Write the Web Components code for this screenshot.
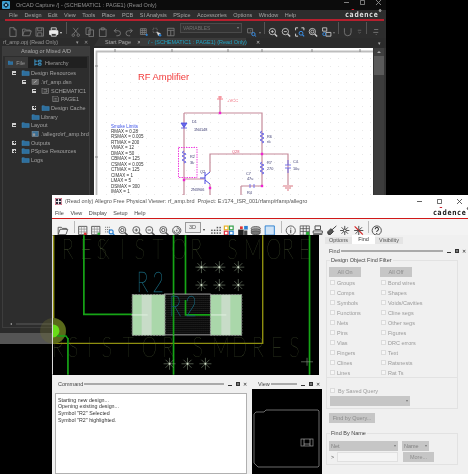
<!DOCTYPE html>
<html><head><meta charset="utf-8"><title>OrCAD and Allegro</title>
<style>html,body{margin:0;padding:0;background:#000;width:468px;height:474px;overflow:hidden}</style>
</head><body>
<x-desktop>
  <x-capture></x-capture>
  <x-allegro></x-allegro>
</x-desktop>
<script>
const BASE=':host{display:block;box-sizing:border-box;font-family:"Liberation Sans",Arial,sans-serif}*{box-sizing:border-box}';
function el(name,css,html){customElements.define(name,class extends HTMLElement{
  connectedCallback(){ if(this.shadowRoot)return; const r=this.attachShadow({mode:'open'});
    r.innerHTML='<style>'+BASE+css+'</style>'+(typeof html==='function'?html(this):html);}
});}
const S=(b)=>`<svg viewBox="0 0 12 12" width="100%" height="100%" fill="none" stroke="var(--ic,#8a8a8a)" stroke-width="1">${b}</svg>`;
const mag=(inner='')=>`<circle cx="5.500" cy="5.500" r="3.800"/><path d="M8.300 8.300l3 3" stroke-width="1.600"/>${inner}`;
const ICONS={
 new:'<path d="M2.500 .8h5l2.500 2.500v8h-7.500zM7.500 .8v2.500h2.500"/>',
 open:'<path d="M1 10.500v-8h3.500l1 1.200h4.500v1.500M1 10.500h8.500l2-5.800h-8.500z"/>',
 save:'<path d="M1.500 1h9v10h-9zM3.500 1v3.500h5v-3.500M3.500 11v-4h5v4"/>',
 print:'<path d="M3 1h6v3h-6z" stroke="#ddd"/><path d="M1 4.500h10v4.500h-10z" fill="#eee" stroke="#eee"/><path d="M3 8h6v3h-6z" fill="#222" stroke="#eee"/>',
 cut:'<path d="M3 1l5.500 7M9 1l-5.500 7"/><circle cx="3" cy="9.800" r="1.500"/><circle cx="9" cy="9.800" r="1.500"/>',
 copy:'<path d="M1.500 1h5v8h-5zM5 3.500h5.500v8h-5.500z"/>',
 paste:'<path d="M2 2.500h8v9h-8zM4.200 1h3.600v2.500h-3.600z"/>',
 undo:'<path d="M3 4.500h4.500a3 3 0 0 1 0 6h-2M3 4.500l2.500-2.500M3 4.500l2.500 2.500"/>',
 redo:'<path d="M9 4.500h-4.500a3 3 0 0 0 0 6h2M9 4.500l-2.500-2.500M9 4.500l-2.500 2.500"/>',
 gridsel:'<path d="M2 2h7v7h-7zM4.300 2v7M6.600 2v7M2 4.300h7M2 6.600h7"/><circle cx="9.500" cy="9.500" r="1.300" fill="#2a7fd0" stroke="none"/>',
 select:'<path d="M1.500 1.500h5v5h-5z" stroke-dasharray="1 1"/><path d="M6 6l4.500 1.800-1.800.7-.7 2z" fill="#ddd" stroke="#ddd" stroke-width=".5"/><circle cx="10" cy="10" r="1.500" fill="#2a7fd0" stroke="none"/>',
 frame:'<path d="M2 1.500h8v9h-8zM2 4h8M6 4v6.500"/>',
 place:'<path d="M1 2h6v5h-6z"/><path d="M4 5l1.500-1"/><circle cx="8" cy="8.500" r="2" stroke="#3a8ce0" stroke-width="1.200"/><path d="M9.500 10l1.800 1.500" stroke="#3a8ce0" stroke-width="1.200"/>',
 zin:mag('<path d="M3.700 5.500h3.600M5.500 3.700v3.600"/>'),
 zout:mag('<path d="M3.700 5.500h3.600"/>'),
 zfit:'<path d="M1 4v-3h3M8 1h3v3M1 8v3h3" stroke-width="1.200"/><circle cx="7.500" cy="7.500" r="2.300" stroke="#3a8ce0" stroke-width="1.200"/><path d="M9.300 9.300l2 2" stroke="#3a8ce0" stroke-width="1.400"/>',
 zall:mag('<circle cx="5.500" cy="5.500" r="1.800"/>'),
 zmulti:'<path d="M1 1h5v4h-5z"/><path d="M5 6.500h6v4.500h-6z"/><circle cx="3" cy="8.500" r="1.800" stroke="#3a8ce0" stroke-width="1.100"/>',
 magnet:'<path d="M2 1.500v5a4 4 0 0 0 8 0v-5"/>',
 sm:'<path d="M3 3h6M4 6l2 2 2-2"/>',
 gdrop:'<path d="M4 3h5M3 6.500h6M6 9h1"/>',
 board:'<path d="M1.500 1.500h9v9h-9z" stroke="#555"/><path d="M1.500 4.500h9M1.500 7.500h9M4.500 1.500v9M7.500 1.500v9" stroke="#888" stroke-width=".7"/><circle cx="8.700" cy="9.800" r="1.500" fill="#e03030" stroke="none"/>',
 boardg:'<path d="M1.500 1.500h9v9h-9z" stroke="#555"/><path d="M1.500 4.500h9M1.500 7.500h9M4.500 1.500v9M7.500 1.500v9" stroke="#888" stroke-width=".7"/><circle cx="9.300" cy="9.800" r="1.500" fill="#2cae3a" stroke="none"/>',
 dotsz:'<g stroke="#555" stroke-dasharray="1 1"><path d="M1 2.500h5M1 5h5M1 7.500h4"/></g><circle cx="7.500" cy="7.500" r="2.200" stroke="#2a7fd0" stroke-width="1.200"/><path d="M9 9l2 2" stroke="#2a7fd0" stroke-width="1.400"/>',
 rot:'<circle cx="6" cy="6" r="4.500" stroke="#555"/><path d="M6 3a3 3 0 1 1-3 3" stroke="#555"/><circle cx="6" cy="6" r="1" fill="#777" stroke="none"/>',
 dots:'<g fill="#555" stroke="none"><rect x="1" y="5" width="1.600" height="1.600"/><rect x="4" y="5" width="1.600" height="1.600"/><rect x="7" y="5" width="1.600" height="1.600"/><rect x="10" y="5" width="1.600" height="1.600"/><rect x="1" y="8" width="1.600" height="1.600"/><rect x="4" y="8" width="1.600" height="1.600"/><rect x="7" y="8" width="1.600" height="1.600"/><rect x="10" y="8" width="1.600" height="1.600"/><rect x="7" y="2" width="1.600" height="1.600"/><rect x="10" y="2" width="1.600" height="1.600"/></g>',
 color:'<g stroke-width="1.300"><rect x="1.200" y="1.200" width="4" height="4" stroke="#e8b020" fill="#fff"/><rect x="6.800" y="1.200" width="4" height="4" stroke="#35a04a" fill="#fff"/><rect x="1.200" y="6.800" width="4" height="4" stroke="#e03040" fill="#fff"/><rect x="6.800" y="6.800" width="4" height="4" stroke="#2a7fd0" fill="#fff"/></g>',
 mats:'<g stroke="none"><rect x="1" y="5" width="6" height="6" fill="#222"/><rect x="7.500" y="1" width="4" height="4" fill="#2a7fd0"/><rect x="3" y="1.500" width="3" height="3" fill="#e03030"/><rect x="7.500" y="6" width="3.500" height="5" fill="#444"/></g>',
 stack:'<ellipse cx="6" cy="4" rx="5" ry="2.200" fill="#bbb" stroke="#555"/><ellipse cx="6" cy="6.500" rx="5" ry="2.200" fill="#999" stroke="#555"/><ellipse cx="6" cy="8.500" rx="5" ry="2" fill="#777" stroke="#555"/>',
 info:'<circle cx="6" cy="6" r="5" stroke="#555"/><path d="M6 5v4M6 3v1" stroke="#333"/>',
 gridg:'<path d="M1 1h10v10h-10zM1 4h10M1 7h10M4.300 1v10M7.700 1v10" stroke="#444" stroke-width=".8"/><rect x="7.500" y="7.500" width="3.500" height="3.500" fill="#2cae3a" stroke="none"/>',
 stamp:'<path d="M3 1h6v4h-6zM1 6.500h10v2.500h-10zM1 10.500h10" stroke="#444"/>',
 flash:'<path d="M11 1l-5 4.500M5 4l3 3-3.500 3.500-2.500-.5-.5-2.500z" stroke="#333" fill="#555"/>',
 spark:'<path d="M6 1v10M1 6h10M2.500 2.500l7 7M9.500 2.500l-7 7" stroke="#444"/><circle cx="6" cy="6" r="1.500" fill="#fff" stroke="#444"/>',
 sparkx:'<path d="M6 1v10M1 6h10M2.500 2.500l7 7" stroke="#444"/><path d="M1.500 1.500l9 9" stroke="#e03030" stroke-width="1.300"/><path d="M9.500 2.500l-7 7" stroke="#444"/>',
 help:'<circle cx="6" cy="6" r="5" stroke="#444"/><path d="M4.300 4.600a1.800 1.800 0 1 1 2.600 1.500c-.6.3-.9.7-.9 1.400M6 8.700v1" stroke="#333" stroke-width="1.100"/>',
 blue:'<path d="M1 1h10v10h-10z" stroke="#2a7fd0" fill="#cfe3f6"/>'
};
el('x-tool',':host{display:block;width:var(--w,13.5px);height:var(--h,10px);flex:none;padding:0 1px}',
  h=>S(ICONS[h.getAttribute('i')]||''));
el('x-sep',':host{display:block;width:1px;height:var(--sh,12px);background:var(--sc,#555);flex:none;margin:0 var(--sm,2px)}','');
el('x-caret',':host{display:block;width:0;height:0;border:1.5px solid transparent;border-top:2px solid var(--ic,#8a8a8a);border-bottom:0;flex:none;align-self:flex-end;margin:0 1px 1px 0}','');
el('x-wincontrols',':host{display:flex;align-items:center;margin-left:auto;gap:var(--cg,12px);color:var(--wc,#999);padding-right:var(--cr,3px)}svg{display:block;width:5px;height:5px;stroke:currentColor;stroke-width:1;fill:none}',
  `<svg viewBox="0 0 6 6"><path d="M0 3h6"/></svg><svg viewBox="0 0 6 6"><path d="M.5 .5h5v5h-5z"/></svg><svg viewBox="0 0 6 6"><path d="M0 0l6 6M6 0l-6 6"/></svg>`);
el('x-logo',`:host{display:inline-block;position:relative;font-family:"DejaVu Sans",sans-serif;font-weight:700;font-size:7.5px;letter-spacing:.95px;color:var(--lc,#ddd);line-height:9px;transform:scaleX(.8);transform-origin:right center}
  i{position:absolute;left:7.5px;top:-1px;width:3px;height:1.2px;background:#d02030}b{position:absolute;right:-3.5px;top:-1px;width:3px;height:3px;border-radius:50%;border:.5px solid currentColor}`,
  `cadence<i></i><b></b>`);
el('x-tree-row',`:host{display:flex;align-items:center;height:8.67px;color:#a2a2a2;font-size:5.5px;white-space:nowrap;padding-left:calc(9px + 10px * var(--l,0))}
  .t{width:9px;flex:none;display:flex;align-items:center}.t span{width:4px;height:4px;background:#cfcfcf;display:block;position:relative}
  .t span::after{content:"";position:absolute;left:.5px;right:.5px;top:1.5px;height:1px;background:#333}.p span::before{content:"";position:absolute;top:.5px;bottom:.5px;left:1.5px;width:1px;background:#333}
  .i{width:10px;flex:none;height:6px;display:block}`,
  h=>{const k=h.getAttribute('k'),ic=h.getAttribute('i')||'f';
   const g={f:'<path d="M0 1h3l1 1h5v5H0z" fill="#2e6f9e" stroke="#3f8fc5" stroke-width=".6"/>',
    d:'<rect x="0" y="0" width="8" height="7" fill="#666" stroke="#888" stroke-width=".6"/><path d="M2 5l4-3" stroke="#ccc" stroke-width=".8"/>',
    s:'<rect x="0" y="0" width="8" height="7" fill="#333" stroke="#999" stroke-width=".7"/><path d="M2 2h4v3H2" stroke="#bbb" stroke-width=".6" fill="none"/>',
    p:'<path d="M1 0h5l2 2v5H1z" fill="#333" stroke="#aaa" stroke-width=".7"/><path d="M3 3h3M3 5h3" stroke="#ccc" stroke-width=".5"/>',
    b:'<rect x="0" y="0" width="8" height="7" fill="#3a6f95" stroke="#999" stroke-width=".6"/><rect x="1" y="3" width="3" height="3" fill="#999"/>'}[ic];
   return `<div class="t ${k==='p'?'p':''}">${k?'<span></span>':''}</div><svg class="i" viewBox="0 0 10 7.5">${g}</svg><span><slot></slot></span>`});
el('x-tree',':host{padding-top:1px;background:#2d2d2d;flex:1}','<slot></slot>');
el('x-left-panel',`:host{width:92px;flex:none;display:flex;flex-direction:column;background:#2b2b2b;color:#a0a0a0}
  .h{height:8px;flex:none;display:flex;align-items:center;font-size:5.3px;padding:0 3px;white-space:nowrap;color:#9a9a9a}
  .h i{margin-left:auto;font-style:normal;font-size:5px;display:flex;gap:5px;padding-right:1px}
  .box{flex:1;margin:0 2px 5px;border:1px solid #3d3d3d;display:flex;flex-direction:column;background:#2d2d2d}
  .t{height:9px;flex:none;background:#3c3c3c;font-size:5.5px;text-align:center;line-height:9px;color:#aaa}
  .tabs{height:11px;flex:none;margin:1px 2px 0;background:#202020;display:flex;font-size:5.5px;color:#9a9a9a;align-items:center}
  .tab{display:flex;align-items:center;height:100%;gap:3px;padding:0 3px}.tab.on{background:#3a3a3a;width:23px}
  .tab svg{width:8px;height:7px}
  .sb{height:7px;flex:none;display:flex;align-items:center;padding-left:7px}.sb::before{content:"";border:1.5px solid transparent;border-right:2px solid #aaa;border-left:0}
  .sb::after{content:"";height:2px;background:#444;flex:1;margin:0 4px}`,
  `<div class="h">rf_amp.opj (Read Only)<i><span>&#9662;</span><span>&#10005;</span></i></div>
   <div class="box"><div class="t">Analog or Mixed A/D</div>
   <div class="tabs"><div class="tab on"><svg viewBox="0 0 9 7"><path d="M0 1h3l1 1h5v5H0z" fill="#2e6f9e" stroke="#3f8fc5" stroke-width=".6"/></svg>File</div>
   <div class="tab" style="padding-left:6px"><svg viewBox="0 0 9 7"><path d="M1 0v7M1 2h3M1 5.5h3M5 1h3v2H5zM5 4.500h3v2H5z" stroke="#3f9fd5" fill="none"/></svg>Hierarchy</div></div>
   <slot></slot><div class="sb"></div></div>`);
el('x-doc-tabs',`:host{display:flex;height:8px;flex:none;font-size:5.5px;align-items:flex-end;white-space:nowrap;color:#aaa;padding-right:5px;background:#2b2b2b}
  .a{width:46px;height:8px;display:flex;align-items:center;padding-left:11px;background:#333;clip-path:polygon(5px 0,100% 0,100% 100%,0 100%);gap:6px}
  .b{width:106px;height:8px;display:flex;align-items:center;padding-left:8px;background:#3b3b3b;color:#1fa4c4;gap:9px}
  u{color:#bbb;text-decoration:none;font-size:5px}i{margin-left:auto;font-style:normal;font-size:5px}`,
  `<div class="a">Start Page <u>&#10005;</u></div><div class="b">/ - (SCHEMATIC1 : PAGE1) (Read Only) <u>&#10005;</u></div><i>&#9662;</i>`);
el('x-scroll-v',`:host{width:13px;flex:none;background:#333;padding:0 2px 0 1px;display:flex;flex-direction:column}
  .u{height:8px;display:flex;justify-content:center;align-items:center;background:#3f3f3f}.u::before{content:"";border:2px solid transparent;border-bottom:2px solid #aaa;border-top:0}
  .th{height:19px;background:#5a5a5a}.tr{flex:1;background:#3c3c3c}`,`<div class="u"></div><div class="th"></div><div class="tr"></div>`);
el('x-schematic',`:host{flex:1;background:#fff;min-width:0}svg{display:block;width:100%;height:100%}
 text{font-family:"Liberation Sans",Arial,sans-serif}`,
 ()=>{
  const res=(x,y)=>`<polyline points="${x},${y} ${x-2},${y+1.5} ${x+2},${y+3} ${x-2},${y+5} ${x+2},${y+7} ${x-2},${y+9} ${x+2},${y+11} ${x},${y+12}" stroke="#6a6ae8" fill="none" stroke-width="1"/>`;
  const lim=["RMAX = 0.28","RSMAX = 0.005","RTMAX = 200","VMAX = 12","DMAX = 50","CBMAX = 125","CSMAX = 0.005","CTMAX = 125","CIMAX = 1","LMAX = 5","DSMAX = 300","IMAX = 1"];
  return `<svg viewBox="94 48 279 285" preserveAspectRatio="xMinYMin slice">
  <defs><pattern id="g" width="8" height="8" patternUnits="userSpaceOnUse"><rect x="2" y="2" width=".7" height=".7" fill="#cfcfcf"/></pattern></defs>
  <rect x="99" y="53" width="274" height="280" fill="url(#g)"/>
  <path d="M373 51.500H96.500V333" fill="none" stroke="#bdbdbd" stroke-width="1.800"/>
  <g stroke="#888" stroke-width="1"><path d="M115 49v3M172 49v3M228 49v3M262 49v3M312 49v3M360 49v3M95 66h3M95 157h3"/></g>
  <text x="138" y="80" font-size="9.4" fill="#f23a3a">RF Amplifier</text>
  <g fill="none" stroke="#c58a9a" stroke-width="1.2">
   <path d="M184 113h78v72M184 113v66M220 100v13M210 172v-18h78v31M262 186h-21M241 186v10M184 179v16h-2M184 179h20M210 184v11"/>
  </g>
  <g fill="#f020d0"><rect x="218.8" y="111.8" width="2.4" height="2.4"/><rect x="260.8" y="152.8" width="2.4" height="2.4"/><rect x="260.8" y="184.8" width="2.4" height="2.4"/><rect x="182.8" y="178.8" width="2.4" height="2.4"/><rect x="208.8" y="186.8" width="2.4" height="2.4"/></g>
  <path d="M220 96v4M217 99h6M218 97l4 0" stroke="#f06070" stroke-width=".8" fill="none"/>
  <text x="227" y="101.5" font-size="4.2" fill="#f06878">+VCC</text>
  <rect x="178.5" y="147.5" width="18.5" height="30" fill="none" stroke="#f040e0" stroke-dasharray="1.500 1" stroke-width="1"/>
  <path d="M181 123h6l-3 4.500zM181 128h6" fill="#6a6ae8" stroke="#4a4ae0" stroke-width=".8"/>
  ${res(184,151)}${res(262,131)}${res(262,162)}
  <path d="M285 165h6M285 168h6M288 160v5M288 168v5" stroke="#6a6ae8" fill="none" stroke-width=".9"/>
  <path d="M283 186h10M285 188h6M287 190h2" stroke="#d05060" stroke-width=".8"/>
  <path d="M250 184v4M254 184v4" stroke="#6a6ae8" stroke-width=".9"/>
  <path d="M205 172v12M205 176l5-4M205 180l5 4M200 178h5" stroke="#4a4ae0" fill="none" stroke-width="1"/>
  <g font-size="3.8" fill="#3a3a70">
   <text x="192" y="122.5">D1</text><text x="194" y="130.5">1N4148</text>
   <text x="190" y="158">R2</text><text x="190" y="164">3k</text>
   <text x="200" y="172.5">Q2</text><text x="191" y="190.5">2N3906</text>
   <text x="267" y="137.5">R6</text><text x="267" y="142.5">r/c</text>
   <text x="267" y="163.5">R7</text><text x="267" y="169.5">270</text>
   <text x="293" y="163">C4</text><text x="293" y="169.5">10u</text>
   <text x="246" y="174.5">C7</text><text x="247" y="180">47u</text>
   <text x="247" y="194">R4</text>
  </g>
  <text x="232" y="153" font-size="4" fill="#e05070">Q28</text>
  <text x="111" y="127.5" font-size="4.5" fill="#3a50e8">Smoke Limits</text>
  <g font-size="4.5" fill="#333">${lim.map((t,i)=>`<text x="111" y="${133+i*5.45}">${t}</text>`).join('')}</g>
  </svg>`});
el('x-capture',`:host{position:absolute;left:0;top:0;width:386px;height:344px;background:#2b2b2b;display:flex;flex-direction:column;--ic:#7c7c7c}
  .title{height:10px;background:#0c0c0c;display:flex;align-items:center;padding-left:2px;color:#8f8f8f;font-size:5.5px;gap:3px;flex:none;white-space:nowrap}
  .title svg{width:8px;height:8px;flex:none}
  .menu{height:9px;flex:none;display:flex;align-items:center;padding-left:9px;gap:6.5px;font-size:5.5px;color:#a5a5a5;padding-right:8px;background:#2d2d2d}
  x-logo{margin-left:auto}
  .red{height:1.5px;flex:none;background:#b5202e;margin-left:5px;margin-right:2px}
  .tb{height:17.5px;flex:none;display:flex;align-items:center;padding:0 0 3px 6px;background:#2d2d2d}
  .combo{width:62px;height:10px;background:#333;border:1px solid #4a4a4a;color:#707070;font-size:5px;line-height:8px;padding-left:2px;margin:0 3px;flex:none;position:relative}
  .combo::after{content:"";position:absolute;right:2px;top:3px;border:1.5px solid transparent;border-top:2px solid #888;border-bottom:0}
  .main{flex:1;display:flex;min-height:0}.right{flex:1;min-width:0;display:flex;flex-direction:column;margin-left:2px}
  .doc{flex:1;min-height:0;display:flex;margin-top:2px}.status{height:11px;flex:none;background:#555}
  .zoom{--ic:#d0d0d0}`,
  `<div class="title"><svg viewBox="0 0 8 8"><rect width="8" height="8" rx="1" fill="#3d9fd0"/><path d="M4 1l3 3-3 3-3-3z" fill="#0c2c44"/><circle cx="4" cy="4" r="1" fill="#bfe6f5"/></svg><span style="margin-left:3px">OrCAD Capture /] - (SCHEMATIC1 : PAGE1) (Read Only)</span><x-wincontrols style="--cg:11px;--cr:5px;margin-top:-6px"></x-wincontrols></div>
  <div class="menu"><span>File</span><span>Design</span><span>Edit</span><span>View</span><span>Tools</span><span>Place</span><span>PCB</span><span>SI Analysis</span><span>PSpice</span><span>Accessories</span><span>Options</span><span>Window</span><span>Help</span><x-logo></x-logo></div>
  <div class="red"></div>
  <div class="tb"><x-tool i="new"></x-tool><x-tool i="open"></x-tool><x-tool i="save"></x-tool><x-tool i="print"></x-tool><x-caret style="--ic:#ddd"></x-caret><x-sep style="margin:0 2px 0 3px"></x-sep><x-tool i="cut"></x-tool><x-tool i="copy"></x-tool><x-tool i="paste"></x-tool><x-tool i="undo"></x-tool><x-tool i="redo"></x-tool><x-tool i="gridsel"></x-tool><x-tool i="select"></x-tool><x-tool i="frame"></x-tool><div class="combo">VARIABLES</div><x-tool i="place"></x-tool><x-caret></x-caret><x-sep style="margin:0 1px 0 2px"></x-sep><x-tool class="zoom" i="zin"></x-tool><x-tool class="zoom" i="zout"></x-tool><x-tool class="zoom" i="zfit"></x-tool><x-tool class="zoom" i="zall"></x-tool><x-tool class="zoom" i="zmulti"></x-tool><x-caret></x-caret><x-sep></x-sep><x-tool i="magnet"></x-tool><x-tool i="sm" style="--w:9px"></x-tool><x-sep></x-sep><x-tool i="gdrop"></x-tool></div>
  <div class="main"><x-left-panel>
    <x-tree>
      <x-tree-row k="m">Design Resources</x-tree-row>
      <x-tree-row style="--l:1" k="m" i="d">.\\rf_amp.dsn</x-tree-row>
      <x-tree-row style="--l:2" k="m" i="s">SCHEMATIC1</x-tree-row>
      <x-tree-row style="--l:3" i="p">PAGE1</x-tree-row>
      <x-tree-row style="--l:2" k="p">Design Cache</x-tree-row>
      <x-tree-row style="--l:1">Library</x-tree-row>
      <x-tree-row k="m">Layout</x-tree-row>
      <x-tree-row style="--l:1" i="b">.\\allegro\\rf_amp.brd</x-tree-row>
      <x-tree-row k="p">Outputs</x-tree-row>
      <x-tree-row k="p">PSpice Resources</x-tree-row>
      <x-tree-row>Logs</x-tree-row>
    </x-tree></x-left-panel>
    <div class="right"><x-doc-tabs></x-doc-tabs><div class="doc"><x-schematic></x-schematic><x-scroll-v></x-scroll-v></div></div>
  </div><div class="status"></div>`);
el('x-board',`:host{flex:1;background:#000;min-height:0}svg{display:block;width:100%;height:100%;overflow:visible}text{font-family:"Lato","DejaVu Sans",sans-serif}`,
 ()=>{
  const star=(x,y)=>`<use href="#st" x="${x}" y="${y}"/>`;
  const pts=[[202,267],[220,267],[239,267],[202,285],[220,285],[239,285],[170,364],[188,364],[206,364]];
  const SX=.72;
  const xs=a=>a.map(v=>(v/SX).toFixed(1)).join(' ');
  return `<svg viewBox="52 235 268 140">
   <defs><g id="st" stroke="#8c9c84" stroke-width=".55"><path d="M-6 0H6M0-6V6M-4-4L4 4M4-4L-4 4"/><circle r="1" fill="#d8e4d0" stroke="none"/></g>
   <pattern id="h" width="2" height="2" patternUnits="userSpaceOnUse"><rect width="2" height="2" fill="#0a0a0a"/><rect width="1" height="1" fill="#2a2a2a"/></pattern>
   <clipPath id="cl"><rect x="52" y="310" width="30" height="40"/></clipPath></defs>
   <g fill="#4c5b35" font-weight="100" font-size="27">
    <text transform="scale(${SX} 1)" y="258.5" x="${xs([62,80,81,97,98,120,135,153,172,191,210,228,245,267,283,300])}">REESKISTOR SMORE</text>
    <text transform="scale(${SX} 1)" y="357" x="${xs([52,68,87,102,123,142,163,178,193,213,233,253,272,290])}">RSISTOR SMDRES</text>
   </g>
   <path d="M53.700 235V343.500H263.500V235" fill="none" stroke="#8f8f10" stroke-width="1.400"/>
   <g fill="none" stroke="#16a416" stroke-width="1.700">
    <path d="M84 235V314.500H147M174 235V375M186 235V315H227M310.500 235V375M68 338V375"/>
   </g>
   <path d="M198 267h22" stroke="#8c9c84" stroke-width=".5"/>
   ${pts.map(p=>star(p[0],p[1])).join('')}
   <path d="M302 362h12M308 358v8" stroke="#8c9c84" stroke-width=".6"/>
   <rect x="165" y="294" width="46" height="41" fill="url(#h)" stroke="#c0c0c0" stroke-width=".8"/>
   <g><rect x="132.500" y="294.500" width="33" height="41" fill="#aad7aa" stroke="#888" stroke-width="1" stroke-dasharray="2 1"/><rect x="211" y="294.500" width="31.500" height="41" fill="#aad7aa" stroke="#888" stroke-width="1" stroke-dasharray="2 1"/>
   <rect x="142" y="295" width="10" height="40" fill="#c8dcc8"/><rect x="222" y="295" width="9" height="40" fill="#c8dcc8"/></g>
   <path d="M174 294V335M186 300V315H211" stroke="#16a416" stroke-width="1.700" fill="none"/>
   <path d="M132 315h16M211 315h16" stroke="#e0f0e0" stroke-width="1"/>
   <g fill="#175f72" font-weight="100" stroke="#175f72" stroke-width=".4" font-size="27">
    <text transform="scale(${SX} 1)" x="${xs([137,153])}" y="292">R2</text>
    <text transform="scale(${SX} 1)" x="${xs([170,186])}" y="316">R2</text>
   </g>
   <circle cx="53" cy="331" r="13" fill="#6a6a30" opacity=".35"/>
   <g clip-path="url(#cl)"><circle cx="53" cy="331" r="13" fill="#5a6a1a"/><circle cx="53" cy="331" r="6.500" fill="#68dc18"/></g>
   <path d="M57 336H66L68 339" stroke="#16a416" stroke-width="1.500" fill="none"/>
   <path d="M52.500 235V375" stroke="#dcdcdc" stroke-width="1"/>
  </svg>`});
el('x-panelhead',`:host{display:flex;align-items:center;font-size:5.5px;color:#444;white-space:nowrap}
  .l{flex:1;height:1.5px;background:#aaa;margin:0 4px 0 1px}
  .c{display:flex;gap:3.5px;align-items:center;color:#222;font-size:5px}.m{width:4px;height:1px;background:#333;margin-top:3px}.f{width:4px;height:4px;border:1px solid #333;background:#777}`,
  `<slot></slot><div class="l"></div><div class="c"><div class="m"></div><div class="f"></div><span>&#10005;</span></div>`);
el('x-command',`:host{flex:1;display:flex;flex-direction:column;min-width:0}
  x-panelhead{height:8px;flex:none;margin:5px 5px 5px 6px}
  .box{flex:1;margin-left:3px;margin-right:5px;background:#fff;border:1px solid #b0b0b0;padding:2.5px 2px;font-size:5.3px;line-height:6.8px;color:#333;white-space:nowrap}`,
  `<x-panelhead>Command</x-panelhead><div class="box">Starting new design...<br>Opening existing design...<br>Symbol "R2" Selected<br>Symbol "R2" highlighted.</div>`);
el('x-view',`:host{width:70px;flex:none;display:flex;flex-direction:column}
  x-panelhead{height:8px;flex:none;margin:5px 2px 1px 6px}
  .box{flex:1;background:#000;min-height:0}svg{display:block;width:100%;height:100%}`,
  `<x-panelhead>View</x-panelhead><div class="box"><svg viewBox="252 389 70 85"><path d="M254 414l2-2h8l2-2h52l1 1v55l-1 1h-60l-4-4z" fill="none" stroke="#999" stroke-width=".7"/><rect x="301" y="439" width="12" height="7" fill="none" stroke="#999" stroke-width=".7"/><path d="M304 439v7M310 439v7M304 444h6" stroke="#ccc" stroke-width=".6" fill="none"/></svg></div>`);
el('x-chk',`:host{display:flex;align-items:center;height:10px;font-size:5.5px;color:#9a9a9a;white-space:nowrap;gap:2px}
  i{display:block;width:5px;height:5px;border:1px solid #dcdcdc;background:#f6f6f6;flex:none}`,`<i></i><span><slot></slot></span>`);
el('x-btn',`:host{display:flex;align-items:center;justify-content:center;background:#c6c6c6;color:#8c8c8c;font-size:5.5px;height:10px;white-space:nowrap}`,`<slot></slot>`);
el('x-combo',`:host{display:flex;align-items:center;background:#c6c6c6;color:#808080;font-size:5.5px;height:10px;padding:0 2px;white-space:nowrap}
  i{margin-left:auto;border:1.5px solid transparent;border-top:2px solid #777;border-bottom:0}`,`<slot></slot><i></i>`);
el('x-find-panel',`:host{width:149px;flex:none;background:#f0f0f0;display:flex;flex-direction:column;font-size:5.5px}
  .tabs{display:flex;height:9px;margin-left:6px;color:#555;white-space:nowrap;flex:none;align-items:flex-end}
  .tabs span{height:7px;background:#e4e4e4;line-height:7px;text-align:center}
  .tabs .on{height:9px;background:#fff;line-height:9px;color:#333}
  x-panelhead{height:8px;margin:3px 2px 0 10px;flex:none}
  .fs{margin:0 10px 0 7px;border:1px solid #e2e2e2;position:relative;flex:none}
  .leg{position:absolute;left:3px;top:-4px;font-size:5.5px;color:#444;background:#f0f0f0;padding:0 1px;line-height:7px;white-space:nowrap}
  .grid{display:grid;grid-template-columns:51px 1fr;padding-left:3px}
  .btns{display:grid;grid-template-columns:51px 1fr;padding:6px 0 1px 2px}.btns x-btn{width:32px}`,
  `<div class="tabs"><span style="width:27px">Options</span><span class="on" style="width:23px">Find</span><span style="width:28px">Visibility</span></div>
  <x-panelhead>Find</x-panelhead>
  <div class="fs" style="margin-top:4.5px;height:118px"><div class="leg">Design Object Find Filter</div>
    <div class="btns"><x-btn>All On</x-btn><x-btn>All Off</x-btn></div>
    <div class="grid">
    ${["Groups","Bond wires","Comps","Shapes","Symbols","Voids/Cavities","Functions","Cline segs","Nets","Other segs","Pins","Figures","Vias","DRC errors","Fingers","Text","Clines","Ratsnests","Lines","Rat Ts"].map(t=>`<x-chk>${t}</x-chk>`).join('')}
    </div></div>
  <div class="fs" style="height:31px;border-top:0;padding:8px 0 0 3px"><x-chk style="gap:3px">By Saved Query</x-chk><x-combo style="width:80px"></x-combo></div>
  <x-btn style="width:46px;margin:4px 0 0 10px;flex:none">Find by Query...</x-btn>
  <div class="fs" style="margin-top:10px;height:32px;padding:7px 0 0 2px"><div class="leg">Find By Name</div>
    <div style="display:flex;gap:4px"><x-combo style="width:69px">Net</x-combo><x-combo style="width:27px">Name</x-combo></div>
    <div style="display:flex;margin-top:1px;align-items:center;color:#555"><span style="width:8px;padding-left:2px">&gt;</span><div style="width:61px;height:10px;border:1px solid #e0e0e0;background:#f4f4f4"></div><x-btn style="width:31px;margin-left:5px">More...</x-btn></div>
  </div>`);
el('x-allegro',`:host{position:absolute;left:52px;top:195px;width:416px;height:279px;background:#f0f0f0;display:flex;flex-direction:column;--ic:#555;--sc:#bbb}
  .title{height:12px;flex:none;background:#fff;display:flex;align-items:center;padding-left:3px;font-size:5.5px;color:#555;white-space:nowrap;gap:3px;--wc:#444}
  .title svg{width:7px;height:7px;flex:none}
  .menu{height:11px;flex:none;background:#fff;display:flex;align-items:center;padding-left:3px;font-size:5.5px;color:#444;gap:6.5px;padding-right:2px;--lc:#222}
  .red{height:1px;background:#d01818;flex:none}
  .tb{height:16px;flex:none;background:#f3f3f3;display:flex;align-items:center;padding-left:4px;--w:13.5px;--h:11px}
  .td{width:16px;height:11px;border:1px solid #999;font-size:5.5px;text-align:center;line-height:9px;color:#555;margin:0 0 0 1px;background:#eee;flex:none}
  .body{flex:1;min-height:0;display:flex}.col{flex:1;min-width:0;display:flex;flex-direction:column}
  .bottom{height:99px;display:flex;flex:none;margin-right:-3px;position:relative}`,
  `<div class="title"><svg viewBox="0 0 8 8"><rect width="8" height="8" fill="#fff" stroke="#c02040"/><path d="M1 1h6v6H1z" fill="#2a2a3a"/><path d="M4 1v6M1 4h6" stroke="#fff"/></svg><span>(Read only) Allegro Free Physical Viewer: rf_amp.brd &nbsp;Project: E:/174_ISR_001/rfamp/rfamp/allegro</span><x-wincontrols style="--cg:15px;--cr:6px"></x-wincontrols></div>
  <div class="menu"><span>File</span><span>View</span><span>Display</span><span>Setup</span><span>Help</span><x-logo style="margin-left:auto"></x-logo></div>
  <div class="red"></div>
  <div class="tb"><x-tool i="open"></x-tool><x-sep style="margin:0 1px 0 4px"></x-sep><x-tool i="board"></x-tool><x-tool i="boardg"></x-tool><x-tool i="dotsz"></x-tool><x-tool i="zall"></x-tool><x-tool i="zin"></x-tool><x-tool i="zout"></x-tool><x-tool i="zall"></x-tool><x-tool i="rot"></x-tool><div class="td">3D</div><x-caret style="margin:0 4px 4px 2px;--ic:#333"></x-caret><x-tool i="dots"></x-tool><x-tool i="color"></x-tool><x-tool i="mats"></x-tool><x-tool i="stack"></x-tool><x-tool i="blue"></x-tool><x-sep style="margin:0 2px 0 5px"></x-sep><x-tool i="info"></x-tool><x-tool i="gridg"></x-tool><x-tool i="stamp"></x-tool><x-tool i="flash"></x-tool><x-tool i="spark"></x-tool><x-tool i="sparkx"></x-tool><x-sep style="margin:0 1px 0 3px"></x-sep><x-tool i="help"></x-tool></div>
  <div class="body"><div class="col"><x-board></x-board><div class="bottom"><x-command></x-command><x-view></x-view></div></div><x-find-panel></x-find-panel></div>`);
el('x-desktop',':host{position:relative;width:468px;height:474px;background:#000;overflow:hidden;filter:blur(.3px)}','<slot></slot>');
</script>
</body></html>
